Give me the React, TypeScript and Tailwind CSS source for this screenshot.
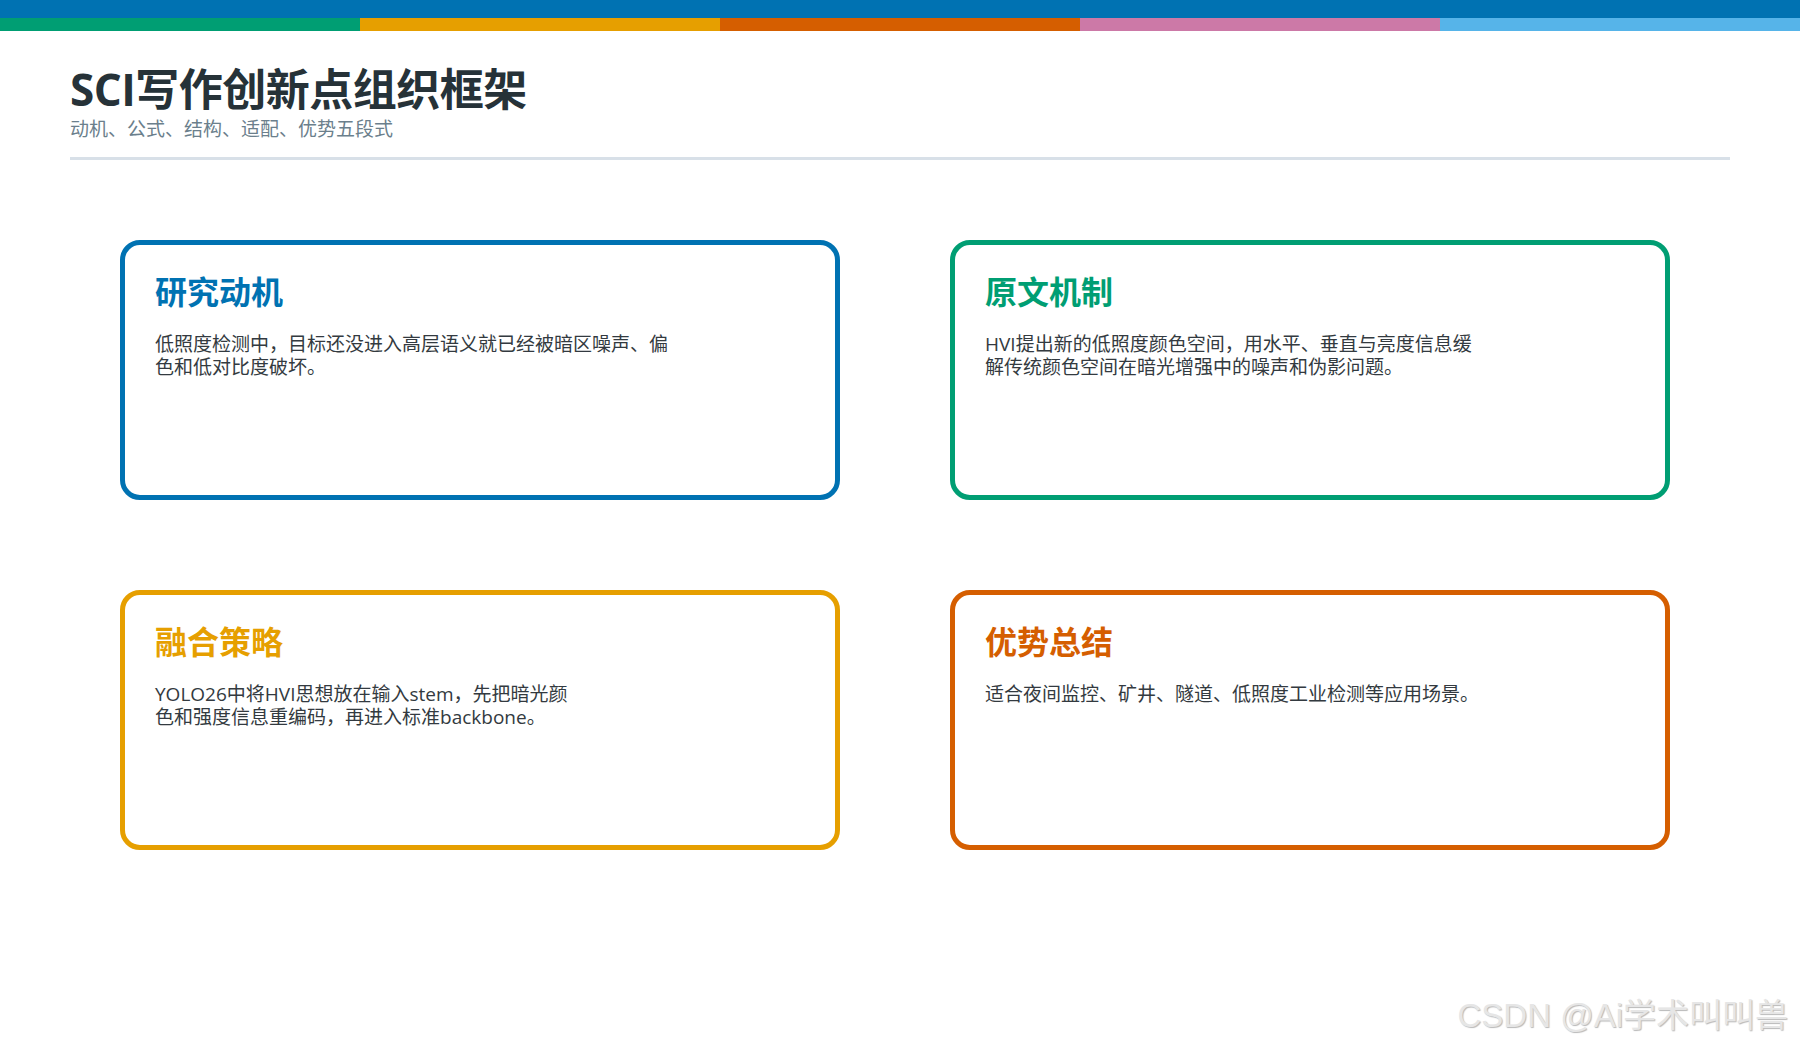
const cards = [
  {
    title: '研究动机',
    border: 'border-[#0072b2]',
    text: 'text-[#0072b2]',
    lines: ['低照度检测中，目标还没进入高层语义就已经被暗区噪声、偏', '色和低对比度破坏。'],
  },
  {
    title: '原文机制',
    border: 'border-[#009e73]',
    text: 'text-[#009e73]',
    lines: ['HVI提出新的低照度颜色空间，用水平、垂直与亮度信息缓', '解传统颜色空间在暗光增强中的噪声和伪影问题。'],
  },
  {
    title: '融合策略',
    border: 'border-[#e69f00]',
    text: 'text-[#e69f00]',
    lines: ['YOLO26中将HVI思想放在输入stem，先把暗光颜', '色和强度信息重编码，再进入标准backbone。'],
  },
  {
    title: '优势总结',
    border: 'border-[#d55e00]',
    text: 'text-[#d55e00]',
    lines: ['适合夜间监控、矿井、隧道、低照度工业检测等应用场景。'],
  },
]

const stripes = ['bg-[#009e73]', 'bg-[#e69f00]', 'bg-[#d55e00]', 'bg-[#cc79a7]', 'bg-[#56b4e9]']

export default function App() {
  return (
    <div
      className="relative h-[1050px] w-[1800px] overflow-hidden bg-white"
      style={{ fontFamily: '"Open Sans", "Noto Sans CJK SC", sans-serif' }}
    >
      {/* Top colour bars */}
      <div className="h-[18px] bg-[#0072b2]" />
      <div className="flex h-[13px]">
        {stripes.map((c) => (
          <div key={c} className={`flex-1 ${c}`} />
        ))}
      </div>

      {/* Header */}
      <div className="px-[70px] pt-[32px]">
        <h1 className="text-[44px] font-bold leading-[52px] tracking-[-0.5px] text-[#263238]">
          SCI写作创新点组织框架
        </h1>
        <p className="mt-[2px] text-[19px] leading-[24px] text-[#6b7f8c]">动机、公式、结构、适配、优势五段式</p>
        <div className="mt-[16px] h-[3px] bg-[#d8e0e8]" />
      </div>

      {/* Cards */}
      <div className="grid grid-cols-[720px_720px] gap-x-[110px] gap-y-[90px] pl-[120px] pt-[80px]">
        {cards.map((card) => (
          <div
            key={card.title}
            className={`h-[260px] rounded-[20px] border-[5px] bg-white pl-[30px] pt-[27px] ${card.border}`}
          >
            <h2 className={`text-[32px] font-bold leading-[40px] ${card.text}`}>{card.title}</h2>
            <div className="mt-[21px] text-[19px] leading-[23px] text-[#333a40]">
              {card.lines.map((line) => (
                <p key={line} className="whitespace-nowrap">
                  {line}
                </p>
              ))}
            </div>
          </div>
        ))}
      </div>

      {/* Watermark */}
      <div
        className="absolute bottom-[14px] right-[12px] text-[33px] leading-[40px] text-[#e6e6e6] [text-shadow:1px_1px_1px_rgba(0,0,0,0.28)]"
        style={{ fontFamily: '"Liberation Sans", "Noto Sans CJK SC", sans-serif' }}
      >
        CSDN @Ai学术叫叫兽
      </div>
    </div>
  )
}
